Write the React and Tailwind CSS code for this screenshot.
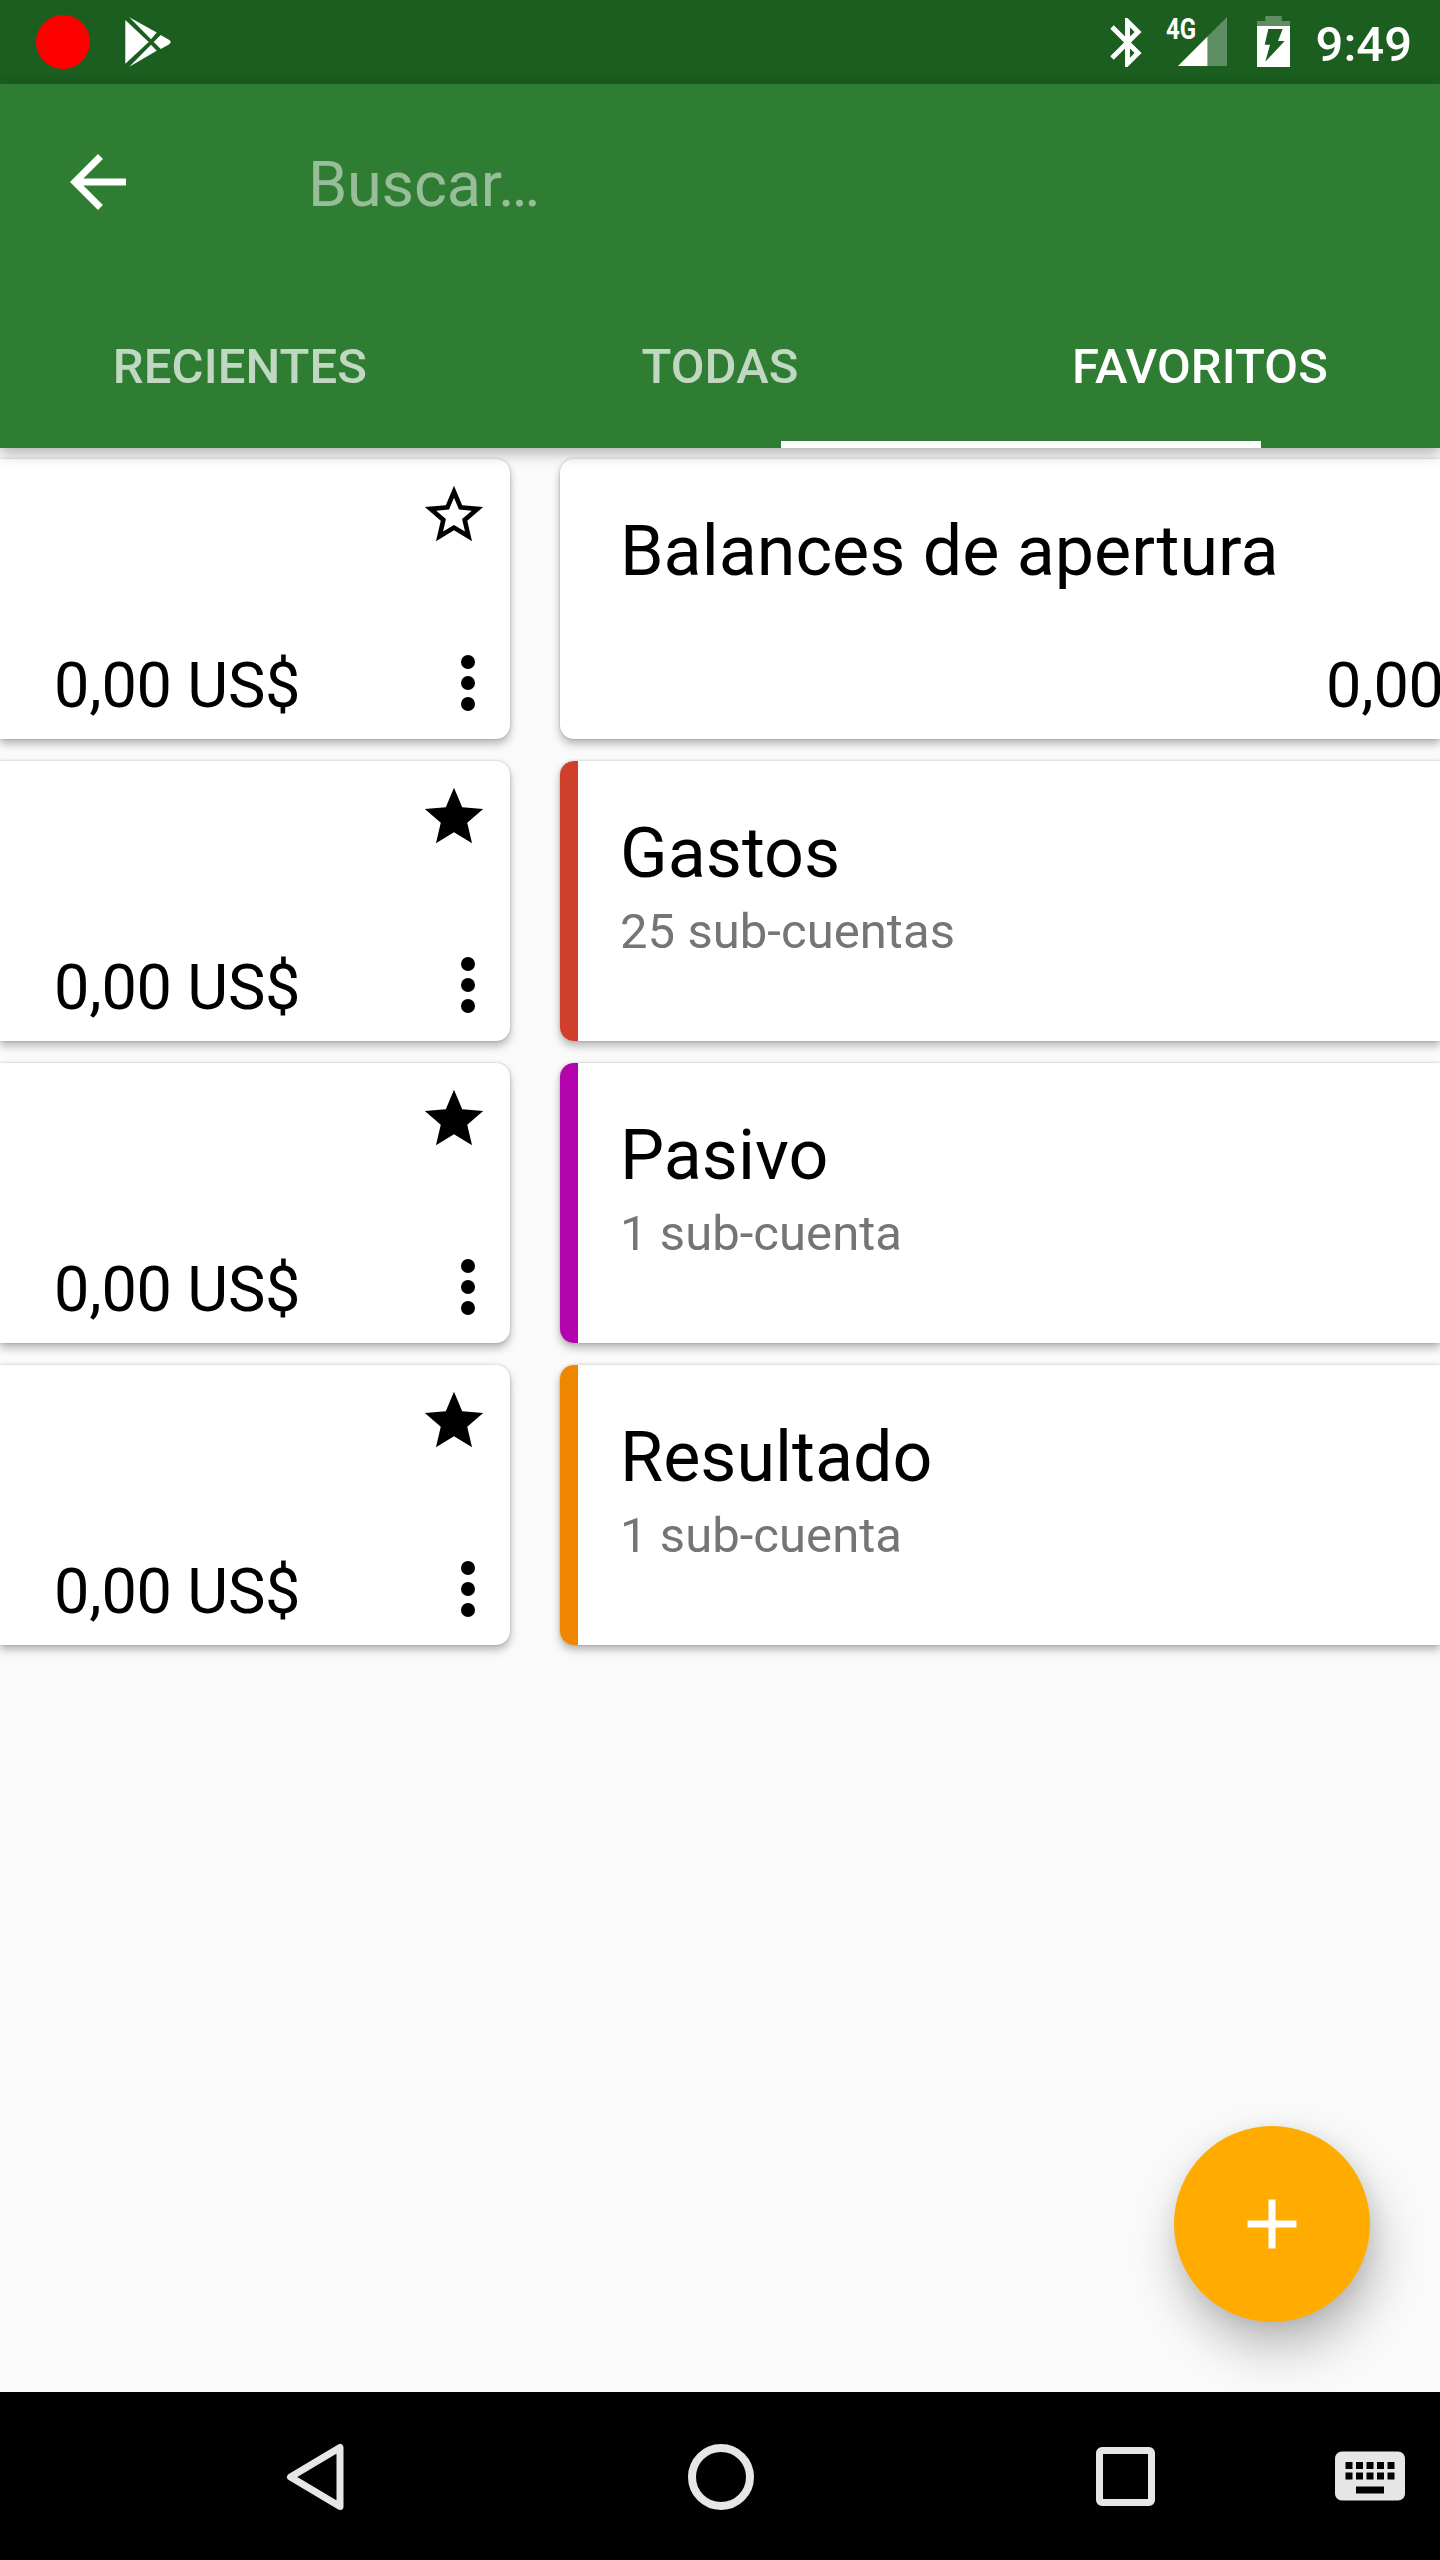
const rows = [
  { name: "Balances de apertura", balance: "0,00 US$", favorite: false },
  { name: "Gastos", detail: "25 sub-cuentas", color: "bg-[#d03f2b]", favorite: true },
  { name: "Pasivo", detail: "1 sub-cuenta", color: "bg-[#b303ac]", favorite: true },
  { name: "Resultado", detail: "1 sub-cuenta", color: "bg-[#ee8600]", favorite: true },
];

const cardShadow = "shadow-[0_5px_9px_rgba(0,0,0,0.27),0_0_3px_rgba(0,0,0,0.2)]";

function StatusBar() {
  return (
    <div className="flex h-[84px] items-start bg-[#1b5e20] text-white">
      <div className="mt-[15px] ml-9 size-[54px] rounded-full bg-[#ff0000]" />
      <svg className="mt-[17px] ml-[35px] h-[50px] w-[46px]" viewBox="0 0 46 50" fill="currentColor">
        <path d="M0.3 3 L0.3 46.7 L23.7 25 Z" />
        <path d="M4.3 0.3 L31.7 15.5 L26 22.3 Z" />
        <path d="M4.3 49.7 L31.7 33.7 L26 27.7 Z" />
        <path d="M35.7 18 L43.5 22.5 Q48 25 43.5 27.7 L35.7 32 L28.7 25 Z" />
      </svg>
      <svg className="mt-[13px] ml-auto size-[59px]" viewBox="0 0 24 24" fill="currentColor">
        <path d="M17.71 7.71L12 2h-1v7.59L6.41 5 5 6.41 10.59 12 5 17.59 6.41 19 11 14.41V22h1l5.71-5.71-4.3-4.29 4.3-4.29zM13 5.83l1.88 1.88L13 9.59V5.83zm1.88 10.46L13 18.17v-3.76l1.88 1.88z" />
      </svg>
      <div className="relative mt-[17px] ml-[21px] h-[50px] w-[49px]">
        <svg className="size-full" viewBox="0 0 49 50" fill="currentColor">
          <path opacity="0.3" d="M49 0 V49 H29.5 V19.5 Z" />
          <path d="M0 49 L29.5 19.5 V49 Z" />
        </svg>
        <span className="absolute top-[-6px] left-[-12px] origin-left scale-x-[0.8] text-[30px] leading-[35px] font-bold">4G</span>
      </div>
      <svg className="mt-4 ml-[30px] h-[51px] w-[33px]" viewBox="0 0 33 51" fill="currentColor">
        <path opacity="0.3" d="M8.3 0 H24.7 V5 H33 V10 H0 V5 H8.3 Z" />
        <path fillRule="evenodd" d="M0 10 H33 V51 H0 Z M11.3 13 L25.7 13 L21 25 L27.7 25 L8.3 45.7 L13 28.7 L7.7 28.7 Z" />
      </svg>
      <span className="mt-[3px] mr-[28px] ml-[26px] text-[49px] leading-[84px] font-medium">9:49</span>
    </div>
  );
}

function Header() {
  return (
    <header className="relative z-10 bg-[#2e7d32] text-white shadow-[0_5px_14px_rgba(0,0,0,0.3)]">
      <div className="flex h-[196px] pt-14 pl-14">
        <svg className="size-[84px]" viewBox="0 0 24 24" fill="currentColor">
          <path d="M20 11H7.83l5.59-5.59L12 4l-8 8 8 8 1.41-1.41L7.83 13H20v-2z" />
        </svg>
        <span className="mt-[3px] ml-[168px] text-[63px] leading-[84px] tracking-[-0.2px] text-white/50">Buscar…</span>
      </div>
      <nav className="grid h-[168px] grid-cols-3 text-center text-[49px] leading-[174px] font-medium tracking-[0.1px]">
        <span className="text-white/70">RECIENTES</span>
        <span className="text-white/70">TODAS</span>
        <span>FAVORITOS</span>
      </nav>
      <div className="absolute bottom-0 left-[781px] h-[7px] w-[480px] bg-white" />
    </header>
  );
}

function Star({ filled }) {
  return (
    <svg className="mt-[21px] mr-[21px] size-[70px]" viewBox="0 0 24 24" fill="currentColor">
      {filled ? (
        <path d="M12 17.27L18.18 21l-1.64-7.03L22 9.24l-7.19-.61L12 2 9.19 8.63 2 9.24l5.46 4.73L5.82 21z" />
      ) : (
        <path d="M22 9.24l-7.19-.62L12 2 9.19 8.63 2 9.24l5.46 4.73L5.82 21 12 17.27 18.18 21l-1.63-7.03L22 9.24zM12 15.4l-3.76 2.27 1-4.28-3.32-2.88 4.38-.38L12 6.1l1.71 4.04 4.38.38-3.32 2.88 1 4.28L12 15.4z" />
      )}
    </svg>
  );
}

function LeftCard({ favorite }) {
  return (
    <div className={`flex h-[280px] w-[510px] justify-between rounded-r-[14px] bg-white ${cardShadow}`}>
      <span className="mt-[190px] ml-[54px] text-[63px] leading-[74px] tracking-[-0.2px] whitespace-nowrap">0,00 US$</span>
      <div className="flex flex-col items-end">
        <Star filled={favorite} />
        <svg className="mt-[91px] size-[84px]" viewBox="0 0 24 24" fill="currentColor">
          <circle cx="12" cy="6" r="2" />
          <circle cx="12" cy="12" r="2" />
          <circle cx="12" cy="18" r="2" />
        </svg>
      </div>
    </div>
  );
}

function RightCard({ name, detail, balance, color }) {
  return (
    <div className={`rounded-l-[14px] bg-white ${cardShadow}`}>
      <div className="flex h-[280px] w-[880px] overflow-hidden rounded-l-[14px]">
        <div className={`w-[18px] shrink-0 ${color ?? ""}`} />
        <div className="ml-[42px] flex min-w-0 grow flex-col pt-[51px] whitespace-nowrap">
          <span className="text-[70px] leading-[82px]">{name}</span>
          {detail && <span className="mt-[9px] text-[49px] leading-[58px] tracking-[0.05px] text-[#757575]">{detail}</span>}
          {balance && <span className="mt-[57px] ml-[706px] text-[63px] leading-[74px] tracking-[-0.2px]">{balance}</span>}
        </div>
      </div>
    </div>
  );
}

function NavBar() {
  return (
    <div className="flex h-[168px] items-center bg-black text-[#e6e6e6]">
      <svg className="mt-px ml-[285px] h-[70px] w-[60px]" viewBox="0 0 60 70" fill="none" stroke="currentColor" strokeWidth="7" strokeLinejoin="round">
        <path d="M55 5.5 V64.5 L5.5 35 Z" />
      </svg>
      <div className="mt-px ml-[343px] size-[66px] rounded-full border-[8px] border-[#e6e6e6]" />
      <div className="mt-px ml-[342px] size-[59px] rounded-[6px] border-[7px] border-[#e6e6e6]" />
      <svg className="ml-[173px] size-[84px]" viewBox="0 0 24 24" fill="currentColor">
        <path d="M20 5H4c-1.1 0-1.99.9-1.99 2L2 17c0 1.1.9 2 2 2h16c1.1 0 2-.9 2-2V7c0-1.1-.9-2-2-2zm-9 3h2v2h-2V8zm0 3h2v2h-2v-2zM8 8h2v2H8V8zm0 3h2v2H8v-2zm-1 2H5v-2h2v2zm0-3H5V8h2v2zm9 7H8v-2h8v2zm0-4h-2v-2h2v2zm0-3h-2V8h2v2zm3 3h-2v-2h2v2zm0-3h-2V8h2v2z" />
      </svg>
    </div>
  );
}

export default function App() {
  return (
    <div className="flex h-[2560px] w-[1440px] flex-col overflow-hidden bg-[#fafafa] font-['Roboto',sans-serif] text-black">
      <StatusBar />
      <Header />
      <main className="relative flex grow gap-[50px] overflow-hidden pt-[11px]">
        <div className="flex flex-col gap-[22px]">
          {rows.map((row) => (
            <LeftCard key={row.name} favorite={row.favorite} />
          ))}
        </div>
        <div className="flex w-[880px] flex-col gap-[22px]">
          {rows.map((row) => (
            <RightCard key={row.name} {...row} />
          ))}
        </div>
        <button className="absolute right-[70px] bottom-[70px] flex size-[196px] items-center justify-center rounded-full bg-[#ffab00] shadow-[6px_26px_50px_rgba(0,0,0,0.26),2px_4px_20px_rgba(0,0,0,0.08)]">
          <svg className="size-[84px]" viewBox="0 0 24 24" fill="white">
            <path d="M19 13h-6v6h-2v-6H5v-2h6V5h2v6h6v2z" />
          </svg>
        </button>
      </main>
      <NavBar />
    </div>
  );
}
